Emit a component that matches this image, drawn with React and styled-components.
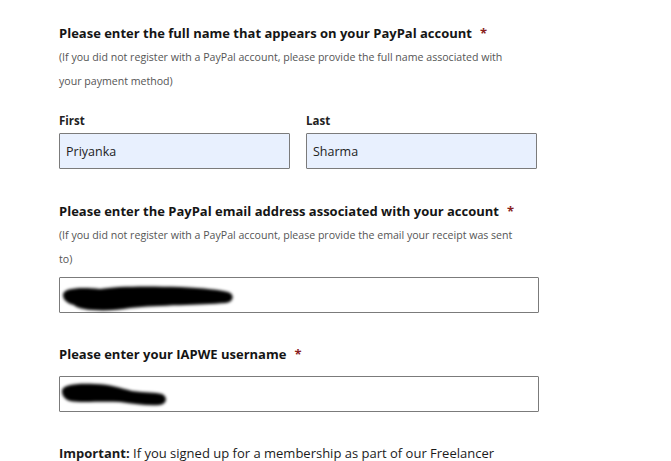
import React from "react";
import styled, { createGlobalStyle } from "styled-components";

const Global = createGlobalStyle`
  html, body { margin: 0; padding: 0; background: #fff; }
  body { font-family: "Open Sans", "Noto Sans", sans-serif; color: #1b1b1b; }
`;

const Page = styled.div`
  width: 671px;
  height: 461px;
  overflow: hidden;
  box-sizing: border-box;
  padding: 24px 0 0 59px;
`;

const Field = styled.div`
  display: flex;
  flex-direction: column;
  width: 480px;
  margin-top: ${(p) => p.$mt || 0}px;
`;

const Heading = styled.div`
  font-weight: 700;
  font-size: 13px;
  line-height: 18px;
  color: #151515;
`;

const Req = styled.span`
  color: #8a1f1f;
  margin-left: 8px;
  font-weight: 700;
`;

const Hint = styled.div`
  max-width: 462px;
  font-size: 10.6px;
  line-height: 23.5px;
  color: #555;
  margin-top: ${(p) => p.$mt || 0}px;
`;

const NameRow = styled.div`
  display: grid;
  grid-template-columns: 231px 231px;
  column-gap: 16px;
  margin-top: 20px;
`;

const Col = styled.div`
  display: flex;
  flex-direction: column;
  gap: 4px;
`;

const Label = styled.div`
  font-weight: 700;
  font-size: 11.5px;
  line-height: 16px;
  color: #222;
`;

const Input = styled.div`
  position: relative;
  box-sizing: border-box;
  height: 36px;
  width: ${(p) => p.$w || 480}px;
  border: 1px solid #7b7b7b;
  border-radius: 1px;
  background: ${(p) => (p.$filled ? "#e8f0fe" : "#fff")};
  margin-top: ${(p) => p.$mt || 0}px;
  display: flex;
  align-items: center;
  padding-left: 6px;
  font-size: 12.5px;
  color: #222;
`;

const Redact = styled.svg`
  position: absolute;
  left: 0;
  top: 0;
  overflow: visible;
`;

const Important = styled.div`
  margin-top: 32px;
  font-size: 13px;
  line-height: 18px;
  color: #1b1b1b;
  b { font-weight: 700; }
`;

export default function App() {
  return (
    <>
      <Global />
      <Page>
        <Field>
          <Heading>
            Please enter the full name that appears on your PayPal account<Req>*</Req>
          </Heading>
          <Hint $mt={4}>
            (If you did not register with a PayPal account, please provide the full name associated with your payment method)
          </Hint>
          <NameRow>
            <Col>
              <Label>First</Label>
              <Input $w={231} $filled>Priyanka</Input>
            </Col>
            <Col>
              <Label>Last</Label>
              <Input $w={231} $filled>Sharma</Input>
            </Col>
          </NameRow>
        </Field>

        <Field $mt={33}>
          <Heading>
            Please enter the PayPal email address associated with your account<Req>*</Req>
          </Heading>
          <Hint $mt={4}>
            (If you did not register with a PayPal account, please provide the email your receipt was sent to)
          </Hint>
          <Input $mt={6}>
            <Redact width="480" height="36" viewBox="0 0 480 36">
              <defs>
                <filter id="b1" x="-10%" y="-50%" width="120%" height="200%">
                  <feGaussianBlur stdDeviation="1.6" />
                </filter>
              </defs>
              <path
                filter="url(#b1)"
                fill="#000"
                d="M3,17 C3,10 20,9 40,11 C55,8 90,8 120,9 C145,10 160,12 168,14 C175,16 174,24 166,25 C140,27 100,27 70,30 C50,34 18,33 14,27 C6,25 3,21 3,17 Z"
              />
            </Redact>
          </Input>
        </Field>

        <Field $mt={32}>
          <Heading>
            Please enter your IAPWE username<Req>*</Req>
          </Heading>
          <Input $mt={13}>
            <Redact width="480" height="36" viewBox="0 0 480 36">
              <defs>
                <filter id="b2" x="-10%" y="-50%" width="120%" height="200%">
                  <feGaussianBlur stdDeviation="1.6" />
                </filter>
              </defs>
              <path
                filter="url(#b2)"
                fill="#000"
                d="M2,14 C2,8 15,6 35,7 C50,7 60,11 72,14 C85,16 95,15 102,17 C108,20 107,27 100,28 C88,29 75,27 60,25 C40,24 20,26 10,24 C4,22 2,18 2,14 Z"
              />
            </Redact>
          </Input>
        </Field>

        <Important>
          <b>Important:</b> If you signed up for a membership as part of our Freelancer
        </Important>
      </Page>
    </>
  );
}
